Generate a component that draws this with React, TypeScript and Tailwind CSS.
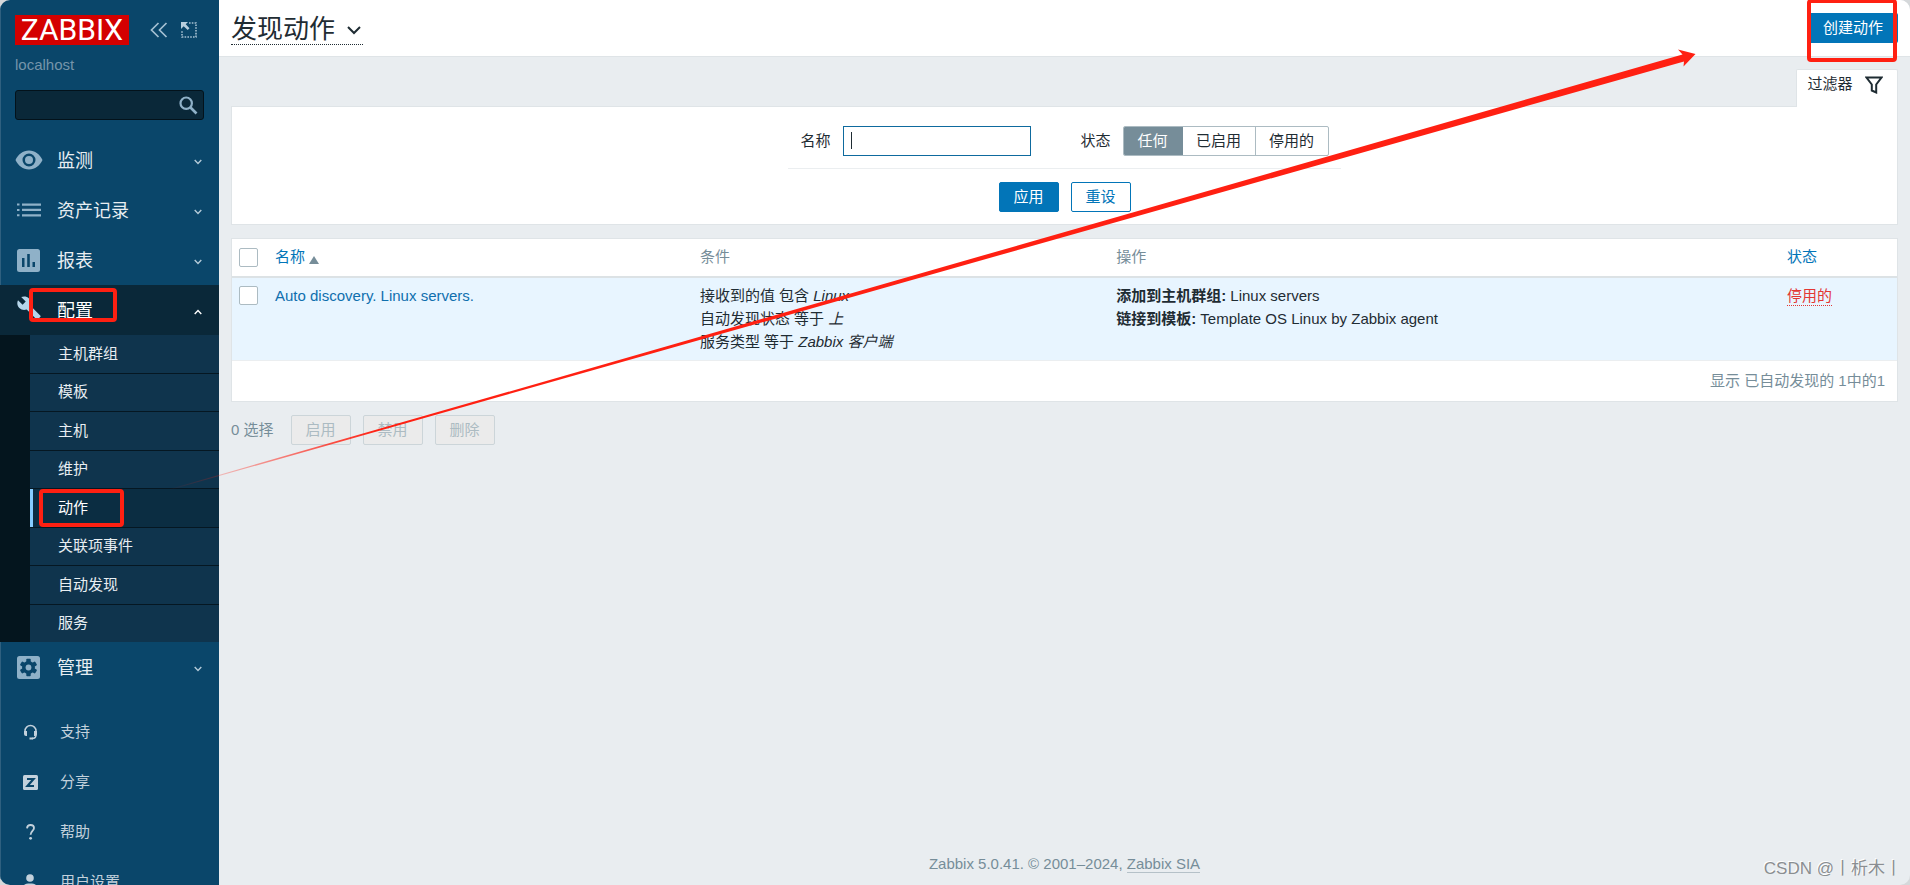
import React from "react";

type MenuItem = { label: string; icon: React.ReactNode };

const Eye = () => (
  <svg width="28" height="20" viewBox="0 0 28 20" fill="#8fb1c8">
    <path fillRule="evenodd" d="M14 0.500C8 0.500 3 4.400 0.500 10C3 15.600 8 19.500 14 19.500S25 15.600 27.500 10C25 4.400 20 0.500 14 0.500ZM14 16.500A6.500 6.500 0 1 1 14 3.500A6.500 6.500 0 0 1 14 16.500Z" />
    <circle cx="14" cy="10" r="4" />
  </svg>
);

const List = () => (
  <svg width="24" height="14" viewBox="0 0 24 14" fill="#8fb1c8">
    <path d="M0 0.500h2.500v2H0zM5 0.500h19v2.300H5zM0 6h2.500v2H0zM5 5.800h19v2.300H5zM0 11.300h2.500v2H0zM5 11.200h19v2.300H5z" />
  </svg>
);

const Bars = () => (
  <svg width="23" height="23" viewBox="0 0 23 23">
    <rect width="23" height="23" rx="2.500" fill="#8fb1c8" />
    <path d="M5 9h2.500v9H5zM10.200 5h2.600v13h-2.600zM15.500 13h2.500v5h-2.500z" fill="#0a466a" />
  </svg>
);

const Wrench = () => (
  <svg width="24" height="24" viewBox="0 0 24 24" fill="#b5d5ea">
    <path d="M23.200 19.500L13.500 9.800C14.500 7.300 14 4.400 12 2.400C9.900 0.300 6.700 -0.100 4.200 1.100L8.700 5.600L5.600 8.700L1 4.200C-0.300 6.700 0.200 9.900 2.300 12C4.300 14 7.200 14.500 9.700 13.500L19.400 23.200C19.800 23.600 20.500 23.600 20.900 23.200L23.200 20.900C23.700 20.500 23.700 19.800 23.200 19.500Z" />
  </svg>
);

const gearTeeth = [0, 60, 120, 180, 240, 300];

const Gear = () => (
  <svg width="23" height="23" viewBox="0 0 23 23">
    <rect width="23" height="23" rx="2.500" fill="#8fb1c8" />
    <g fill="#0a466a">
      <circle cx="11.500" cy="11.500" r="6.400" />
      {gearTeeth.map((a) => (
        <rect key={a} x="9.300" y="2.800" width="4.400" height="5" rx="0.800" transform={`rotate(${a} 11.500 11.500)`} />
      ))}
    </g>
    <circle cx="11.500" cy="11.500" r="2.900" fill="#8fb1c8" />
  </svg>
);

const Headset = () => (
  <svg width="15" height="16" viewBox="0 0 15 16" fill="none">
    <path d="M2 9V7A5.500 5.500 0 0 1 13 7V11C13 13.500 11.500 14.500 9 14.500" stroke="#c3d1dc" strokeWidth="1.500" />
    <path d="M1 7h3v5H3a2 2 0 0 1-2-2zM11 7h3v3a2 2 0 0 1-2 2h-1zM6.500 13.500h3.500v2H6.500z" fill="#c3d1dc" />
  </svg>
);

const Share = () => (
  <svg width="15" height="15" viewBox="0 0 15 15">
    <rect width="15" height="15" rx="1.500" fill="#c3d1dc" />
    <path d="M4 4h6.500L4.500 11H11" fill="none" stroke="#0a466a" strokeWidth="2.200" />
  </svg>
);

const Question = () => (
  <svg width="9" height="16" viewBox="0 0 9 16" fill="none">
    <path d="M1 4.300C1.200 2.200 2.600 1 4.600 1S8 2.200 8 4.100C8 6.800 4.600 7.200 4.600 10.800" stroke="#c3d1dc" strokeWidth="1.800" />
    <circle cx="4.600" cy="14.300" r="1.400" fill="#c3d1dc" />
  </svg>
);

const User = () => (
  <svg width="14" height="16" viewBox="0 0 14 16" fill="#c3d1dc">
    <circle cx="7" cy="4" r="3.800" />
    <path d="M0 16V13.500C0 10.800 2.500 9.500 7 9.500S14 10.800 14 13.500V16Z" />
  </svg>
);

const Caret = ({ up = false }: { up?: boolean }) => (
  <svg width="8" height="6" viewBox="0 0 8 6" fill="none" className="mt-1">
    <path d={up ? "M0.700 5L4 1.500L7.300 5" : "M0.700 1L4 4.500L7.300 1"} stroke={up ? "#ffffff" : "#b4cad8"} strokeWidth="1.400" />
  </svg>
);

const topMenu: MenuItem[] = [
  { label: "监测", icon: <Eye /> },
  { label: "资产记录", icon: <List /> },
  { label: "报表", icon: <Bars /> },
];

const subMenu = ["主机群组", "模板", "主机", "维护", "动作", "关联项事件", "自动发现", "服务"];

const userMenu: MenuItem[] = [
  { label: "支持", icon: <Headset /> },
  { label: "分享", icon: <Share /> },
  { label: "帮助", icon: <Question /> },
  { label: "用户设置", icon: <User /> },
];

function MainItem({ item }: { item: MenuItem }) {
  return (
    <a href="#" className="flex h-[50px] items-center pr-[17px] text-lg text-[#e8eef2]">
      <span className="flex w-[57px] justify-center">{item.icon}</span>
      <span className="flex-1 pt-px">{item.label}</span>
      <Caret />
    </a>
  );
}

function Sidebar() {
  return (
    <aside className="w-[219px] shrink-0 overflow-hidden bg-[#0a466a] shadow-[inset_1px_0_0_#2f607f]">
      <div className="flex items-center px-[15px] pt-[15px]">
        <a href="#" className="flex h-[30px] w-[114px] items-center justify-center bg-[#d40000] font-[Roboto] text-[30px] leading-[30px] text-white">
          ZABBIX
        </a>
        <button type="button" aria-label="收起侧边栏" className="ml-[21px]">
          <svg width="18" height="16" viewBox="0 0 18 16" fill="none" stroke="#a5c0d2" strokeWidth="1.700">
            <path d="M8.500 1L1.500 8L8.500 15M16.500 1L9.500 8L16.500 15" />
          </svg>
        </button>
        <button type="button" aria-label="隐藏侧边栏" className="ml-[13px]">
          <svg width="16" height="16" viewBox="0 0 16 16">
            <path d="M8 1H15V15H1V8" fill="none" stroke="#a5c0d2" strokeWidth="1.600" strokeDasharray="1.600 1.200" />
            <path d="M0 0H7L4.700 2.300L8.500 6.200L6.700 8L2.700 4.200L0 7Z" fill="#b8cfde" />
          </svg>
        </button>
      </div>
      <div className="px-[15px] pt-[9px] text-[15px] leading-[22px] text-[#7595aa]">localhost</div>
      <form className="mx-[15px] mt-[14px] mb-[15px] flex h-[30px] items-center rounded-[3px] border border-[#03121b] bg-[#0a2839] pr-[5px]">
        <input type="text" aria-label="搜索" className="min-w-0 flex-1 bg-transparent px-2 text-[15px] text-white outline-none" />
        <button type="button" aria-label="搜索">
          <svg width="19" height="19" viewBox="0 0 19 19" fill="none" stroke="#8fb1c8">
            <circle cx="7.200" cy="7.200" r="5.700" strokeWidth="2.200" />
            <path d="M11.500 11.500L17.500 17.500" strokeWidth="2.600" />
          </svg>
        </button>
      </form>
      <nav>
        {topMenu.map((item) => (
          <MainItem key={item.label} item={item} />
        ))}
        <a href="#" className="relative flex h-[50px] items-center bg-[#0a2839] pr-[17px] text-lg text-white">
          <span className="flex w-[57px] justify-center pb-1">
            <Wrench />
          </span>
          <span className="flex-1 pt-px">配置</span>
          <Caret up />
          <span className="absolute top-[3px] left-[29px] h-[34px] w-[88px] rounded-[4px] border-4 border-[#ff2012]" />
        </a>
        <div className="bg-[#04151e] pl-[30px]">
          <ul className="grid h-[307px] auto-rows-fr gap-px bg-[#051722] text-[15px] text-[#e8eef2]">
            {subMenu.map((label) =>
              label === "动作" ? (
                <li key={label} className="relative">
                  <a href="#" className="flex h-full items-center border-l-[3px] border-[#86ccff] bg-[#0b2d42] pl-[25px] text-white">
                    {label}
                  </a>
                  <span className="absolute inset-y-0 left-[9px] w-[85px] rounded-[4px] border-4 border-[#ff2012]" />
                </li>
              ) : (
                <li key={label}>
                  <a href="#" className="flex h-full items-center bg-[#0f344d] pl-7">
                    {label}
                  </a>
                </li>
              )
            )}
          </ul>
        </div>
        <MainItem item={{ label: "管理", icon: <Gear /> }} />
      </nav>
      <nav className="pt-[15px]">
        {userMenu.map((item) => (
          <a key={item.label} href="#" className="flex h-[50px] items-center text-[15px] text-[#c3d1dc]">
            <span className="flex w-[60px] justify-center">{item.icon}</span>
            {item.label}
          </a>
        ))}
      </nav>
    </aside>
  );
}

function Filter() {
  return (
    <section>
      <div className="flex justify-end">
        <button
          type="button"
          className="relative -mb-px flex h-[38px] w-[102px] items-center justify-center gap-3 rounded-t-[2px] border border-b-0 border-[#dfe4e7] bg-white pr-1 pb-2 text-[15px]"
        >
          过滤器
          <svg width="18" height="18" viewBox="0 0 18 18" fill="none" stroke="#1f2c33" strokeWidth="2">
            <path d="M1.500 1.500H16.500L11.200 8.500V16.500L6.800 14.500V8.500Z" />
          </svg>
        </button>
      </div>
      <form className="flex flex-col items-center border border-[#dfe4e7] bg-white pt-[19px] pb-3">
        <div className="flex items-center border-b border-[#ebeef0] px-3 pb-3">
          <label htmlFor="filter-name" className="mr-3">名称</label>
          <div className="relative">
            <input
              id="filter-name"
              type="text"
              defaultValue=""
              className="block h-[30px] w-[188px] border border-[#0e6a9e] px-[7px] outline-none"
            />
            <span className="absolute top-[6px] left-2 h-[17px] w-px bg-[#1f2c33]" />
          </div>
          <fieldset className="ml-[50px] flex items-center">
            <legend className="contents">
              <span className="mr-3">状态</span>
            </legend>
            <div className="flex h-[30px] items-stretch overflow-hidden rounded-[2px] border border-[#acbbc2]">
              <label className="-m-px flex w-[60px] items-center justify-center bg-[#768d99] text-white">
                <input type="radio" name="status" defaultChecked className="sr-only" />
                任何
              </label>
              <label className="ml-px flex w-[73px] items-center justify-center border-r border-[#acbbc2]">
                <input type="radio" name="status" className="sr-only" />
                已启用
              </label>
              <label className="flex w-[72px] items-center justify-center">
                <input type="radio" name="status" className="sr-only" />
                停用的
              </label>
            </div>
          </fieldset>
        </div>
        <div className="flex gap-3 pt-[13px]">
          <button type="button" className="h-[30px] w-[60px] rounded-[2px] border border-[#0275b8] bg-[#0275b8] text-white">
            应用
          </button>
          <button type="button" className="h-[30px] w-[60px] rounded-[2px] border border-[#0275b8] bg-white text-[#0275b8]">
            重设
          </button>
        </div>
      </form>
    </section>
  );
}

function Checkbox({ label }: { label: string }) {
  return (
    <input
      type="checkbox"
      aria-label={label}
      className="block size-[19px] appearance-none rounded-[2px] border border-[#acbbc2] bg-white"
    />
  );
}

function ActionsTable() {
  return (
    <div className="mt-[13px] border border-[#dfe4e7] bg-white">
      <table className="w-full table-fixed border-collapse text-left">
        <colgroup>
          <col className="w-[35px]" />
          <col className="w-[26%]" />
          <col className="w-[25%]" />
          <col />
          <col className="w-[118px]" />
        </colgroup>
        <thead>
          <tr className="h-[38px] border-b-2 border-[#dce2e5] text-[#768d99] *:font-normal">
            <th className="pl-[7px]">
              <Checkbox label="全选" />
            </th>
            <th className="pl-2">
              <a href="#" className="inline-flex items-center gap-1 text-[#0275b8]">
                名称
                <svg width="10" height="8" viewBox="0 0 10 8" fill="#768d99" className="mt-1">
                  <path d="M5 0L10 8H0Z" />
                </svg>
              </a>
            </th>
            <th>条件</th>
            <th>操作</th>
            <th className="pl-2">
              <a href="#" className="text-[#0275b8]">状态</a>
            </th>
          </tr>
        </thead>
        <tbody>
          <tr className="border-b border-[#ebeef0] bg-[#e8f5ff] align-top leading-[23px] *:pt-[6px] *:pb-[7px]">
            <td className="pl-[7px]">
              <div className="pt-[2px]">
                <Checkbox label="Auto discovery. Linux servers." />
              </div>
            </td>
            <td className="pl-2">
              <a href="#" className="text-[#0f6fae]">Auto discovery. Linux servers.</a>
            </td>
            <td>
              接收到的值 包含 <em>Linux</em>
              <br />
              自动发现状态 等于 <em>上</em>
              <br />
              服务类型 等于 <em>Zabbix 客户端</em>
            </td>
            <td>
              <b>添加到主机群组:</b> Linux servers
              <br />
              <b>链接到模板:</b> Template OS Linux by Zabbix agent
            </td>
            <td className="pl-2">
              <a href="#" className="inline-block border-b border-dotted border-[#e33734] leading-[18px] text-[#e33734]">停用的</a>
            </td>
          </tr>
        </tbody>
      </table>
      <div className="flex h-10 items-center justify-end px-3 text-[#768d99]">显示 已自动发现的 1中的1</div>
    </div>
  );
}

function Arrow() {
  return (
    <svg className="pointer-events-none absolute top-0 left-0" width="1720" height="500" viewBox="0 0 1720 500">
      <defs>
        <linearGradient id="tail" gradientUnits="userSpaceOnUse" x1="165" y1="490" x2="380" y2="429">
          <stop offset="0" stopColor="#ff2012" stopOpacity="0" />
          <stop offset="1" stopColor="#ff2012" />
        </linearGradient>
      </defs>
      <path d="M170 489L1682.500 54.500L1678 49.500L1695.500 54L1683.500 66.500L1684 61.500L170 489.900Z" fill="url(#tail)" />
    </svg>
  );
}

export default function App() {
  return (
    <div className="h-screen bg-[#d5d8da] font-['Liberation_Sans','Noto_Sans_CJK_SC',sans-serif] text-[15px] text-[#1f2c33]">
      <div className="relative flex h-full overflow-hidden rounded-[10px] bg-[#e9edf0]">
        <Sidebar />
        <main className="flex min-w-0 flex-1 flex-col">
          <header className="flex h-[57px] shrink-0 items-center justify-between border-b border-[#dfe4e7] bg-white px-3">
            <h1 className="pt-[2px]">
              <button type="button" className="flex items-center gap-3 border-b border-dotted border-[#1f2c33] pr-[2px] text-[26px] leading-[30px]">
                发现动作
                <svg width="14" height="9" viewBox="0 0 14 9" fill="none" stroke="#1f2c33" strokeWidth="2" className="mt-1">
                  <path d="M1 1L7 7L13 1" />
                </svg>
              </button>
            </h1>
            <div className="relative">
              <button type="button" className="block h-[30px] w-[90px] rounded-[2px] bg-[#0275b8] text-[15px] text-white">
                创建动作
              </button>
              <span className="absolute -top-[14px] -left-px h-[63px] w-[90px] rounded-[4px] border-4 border-[#ff2012]" />
            </div>
          </header>
          <div className="px-3 pt-3">
            <Filter />
            <ActionsTable />
            <div className="mt-[13px] flex items-center gap-3 text-[#768d99]">
              <span className="mr-[5px]">0 选择</span>
              {["启用", "禁用", "删除"].map((label) => (
                <button key={label} type="button" disabled className="h-[30px] w-[60px] rounded-[2px] border border-[#ccd5d9] bg-[#ebebeb] text-[#acbbc2]">
                  {label}
                </button>
              ))}
            </div>
          </div>
          <footer className="mt-auto pb-[11px] text-center leading-5 text-[#768d99]">
            Zabbix 5.0.41. © 2001–2024,{" "}
            <a href="#" className="inline-block border-b border-[#b5c1c8] leading-[17px]">Zabbix SIA</a>
          </footer>
        </main>
        <Arrow />
        <div className="absolute right-2 bottom-1 text-[17px] leading-6 text-[#8a8e91] [text-shadow:-1px_-1px_0_#ffffff]">
          CSDN @丨析木丨
        </div>
      </div>
    </div>
  );
}
